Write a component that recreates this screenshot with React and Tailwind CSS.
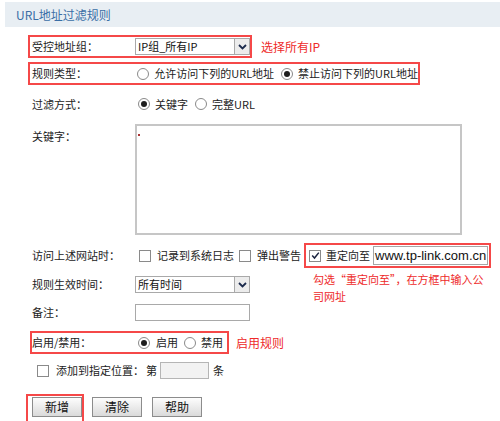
import React from "react";

const FONT = { fontFamily: '"Noto Sans CJK SC", "Microsoft YaHei", "Noto Sans", sans-serif' };

function Radio({ checked }) {
  return (
    <span className="w-[12px] h-[12px] shrink-0 rounded-full border border-[#8a8a8a] bg-white flex items-center justify-center">
      {checked && <span className="w-[6px] h-[6px] rounded-full bg-[#1e1e1e]" />}
    </span>
  );
}

function Checkbox({ checked }) {
  return (
    <span className="w-[12px] h-[12px] shrink-0 border border-[#8a8a8a] bg-white flex items-center justify-center">
      {checked && (
        <svg width="9" height="9" viewBox="0 0 9 9">
          <path d="M1.2 4.6 L3.5 7 L7.8 1.6" fill="none" stroke="#1b2440" strokeWidth="1.5" />
        </svg>
      )}
    </span>
  );
}

function Select({ value }) {
  return (
    <div className="w-[115px] h-[17px] border border-[#a9a9a9] bg-white flex items-stretch">
      <span className="flex-1 pl-[2px] text-[11px] leading-[15px] text-[#111] whitespace-nowrap overflow-hidden">{value}</span>
      <span className="w-[15px] bg-[#ececec] border-l border-[#a9a9a9] flex items-center justify-center">
        <svg width="9" height="6" viewBox="0 0 9 6">
          <path d="M1 1 L4.5 4.5 L8 1" fill="none" stroke="#1b2a4c" strokeWidth="1.8" />
        </svg>
      </span>
    </div>
  );
}

function Btn({ children }) {
  return (
    <div className="w-[50px] h-[20px] border border-[#8c8c8c] bg-gradient-to-b from-[#fdfdfd] to-[#dadada] flex items-center justify-center text-[12px] text-[#111]">
      {children}
    </div>
  );
}

export default function App() {
  return (
    <div className="w-[500px] h-[421px] overflow-hidden bg-white text-[11px] text-[#222]" style={FONT}>
      <div className="mt-[2px] ml-[5px] h-[25px] bg-[#e8eef3] pl-[11px] flex items-center text-[12px] text-[#3a6ea6]">
        URL地址过滤规则
      </div>

      <div className="pl-[28px]">
        {/* row 1 */}
        <div className="mt-[8px] flex items-center">
          <div className="w-[224px] h-[23px] border-2 border-[#f54848] pl-[2px] flex items-center">
            <span className="w-[103px]">受控地址组：</span>
            <Select value="IP组_所有IP" />
          </div>
          <span className="ml-[9px] text-[#ee2a2a] text-[12px]">选择所有IP</span>
        </div>

        {/* row 2 */}
        <div className="mt-[4px] w-[392px] h-[23px] border-2 border-[#f54848] pl-[2px] flex items-center whitespace-nowrap">
          <span className="w-[103px]">规则类型：</span>
          <span className="ml-[3px]"><Radio /></span>
          <span className="ml-[5px]">允许访问下列的URL地址</span>
          <span className="ml-[7px]"><Radio checked /></span>
          <span className="ml-[5px]">禁止访问下列的URL地址</span>
        </div>

        {/* row 3 */}
        <div className="mt-[9px] h-[20px] pl-[4px] flex items-center">
          <span className="w-[103px]">过滤方式：</span>
          <span className="ml-[3px]"><Radio checked /></span>
          <span className="ml-[5px]">关键字</span>
          <span className="ml-[7px]"><Radio /></span>
          <span className="ml-[5px]">完整URL</span>
        </div>

        {/* keyword */}
        <div className="mt-[10px] pl-[4px] flex items-start">
          <span className="w-[103px] pt-[4px]">关键字：</span>
          <div className="w-[327px] h-[111px] border-2 border-[#c6c6c6] bg-white pl-[1px] pt-[8px]">
            <span className="block w-[2px] h-[2px] bg-[#a33]" />
          </div>
        </div>

        {/* access */}
        <div className="mt-[8px] h-[25px] pl-[4px] flex items-center whitespace-nowrap">
          <span className="w-[103px]">访问上述网站时：</span>
          <span className="ml-[4px]"><Checkbox /></span>
          <span className="ml-[6px]">记录到系统日志</span>
          <span className="ml-[5px]"><Checkbox /></span>
          <span className="ml-[6px]">弹出警告</span>
          <div className="ml-[3px] w-[187px] h-[25px] border-2 border-[#f54848] flex items-center">
            <span className="ml-[3px]"><Checkbox checked /></span>
            <span className="ml-[5px]">重定向至</span>
            <div className="ml-[3px] w-[115px] h-[19px] border border-[#a5a5a5] bg-white flex items-center pl-[1px] text-[13px] text-[#111] overflow-hidden" style={{ fontFamily: '"Liberation Sans", Arial, sans-serif' }}>
              www.tp-link.com.cn
            </div>
          </div>
        </div>

        {/* time + note */}
        <div className="mt-[8px] flex items-start">
          <div className="w-[222px]">
            <div className="h-[17px] pl-[4px] flex items-center">
              <span className="w-[103px]">规则生效时间：</span>
              <Select value="所有时间" />
            </div>
            <div className="mt-[11px] h-[17px] pl-[4px] flex items-center">
              <span className="w-[103px]">备注：</span>
              <div className="w-[115px] h-[17px] border border-[#a9a9a9] bg-white" />
            </div>
          </div>
          <div className="ml-[63px] -mt-[5px] text-[#ee2a2a] text-[11px] leading-[17px] whitespace-nowrap">
            勾选“重定向至”，在方框中输入公<br />司网址
          </div>
        </div>

        {/* enable */}
        <div className="mt-[10px] flex items-center whitespace-nowrap">
          <div className="ml-[2px] w-[199px] h-[23px] border-2 border-[#f54848] flex items-center">
            <span className="w-[103px]">启用/禁用：</span>
            <span className="ml-[3px]"><Radio checked /></span>
            <span className="ml-[6px]">启用</span>
            <span className="ml-[6px]"><Radio /></span>
            <span className="ml-[5px]">禁用</span>
          </div>
          <span className="ml-[7px] text-[#ee2a2a] text-[12px]">启用规则</span>
        </div>

        {/* add position */}
        <div className="mt-[8px] h-[17px] flex items-center whitespace-nowrap">
          <span className="ml-[9px]"><Checkbox /></span>
          <span className="ml-[7px]">添加到指定位置：</span>
          <span className="ml-[2px]">第</span>
          <div className="ml-[3px] w-[49px] h-[17px] border border-[#b5b5b5] bg-[#f2f2f2]" />
          <span className="ml-[4px]">条</span>
        </div>

        {/* buttons */}
        <div className="mt-[15px] -ml-[2px] flex items-start">
          <div className="w-[58px] h-[40px] border-2 border-[#f54848] pl-[4px] pt-[1px]">
            <Btn>新增</Btn>
          </div>
          <div className="ml-[8px] mt-[3px]"><Btn>清除</Btn></div>
          <div className="ml-[10px] mt-[3px]"><Btn>帮助</Btn></div>
        </div>
      </div>
    </div>
  );
}
